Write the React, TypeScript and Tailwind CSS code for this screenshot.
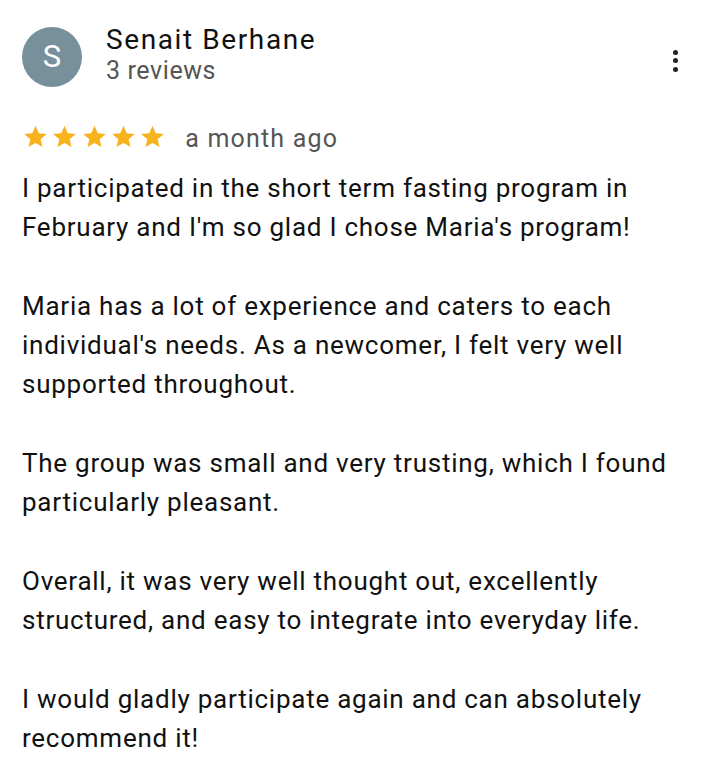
import React from "react";

const Star = () => (
  <svg width="27" height="27" viewBox="0 0 24 24" className="shrink-0">
    <path fill="#f6b31e" d="M12 2.5l2.9 6.6 7.1.6-5.4 4.7 1.6 7-6.2-3.7-6.2 3.7 1.6-7L2 9.7l7.1-.6z" />
  </svg>
);

export default function App() {
  const paras = [
    "I participated in the short term fasting program in February and I'm so glad I chose Maria's program!",
    "Maria has a lot of experience and caters to each individual's needs. As a newcomer, I felt very well supported throughout.",
    "The group was small and very trusting, which I found particularly pleasant.",
    "Overall, it was very well thought out, excellently structured, and easy to integrate into everyday life.",
    "I would gladly participate again and can absolutely recommend it!",
  ];
  return (
    <div className="w-[714px] h-[768px] bg-white overflow-hidden" style={{ fontFamily: "Roboto, 'Noto Sans', sans-serif" }}>
      <div className="flex items-start pt-[27px] pl-[22px] pr-[36px]">
        <div className="w-[60px] h-[60px] rounded-full bg-[#78909c] flex items-center justify-center text-white text-[31px] shrink-0">
          S
        </div>
        <div className="ml-[24px] flex-1">
          <div className="text-[28px] text-[#111] leading-[34px] mt-[-4px] tracking-[1.6px]">Senait Berhane</div>
          <div className="text-[25px] text-[#555] leading-[30px] mt-[-1px] tracking-[0.6px]">3 reviews</div>
        </div>
        <div className="flex flex-col gap-[3.5px] items-center mt-[22.5px]">
          <span className="w-[5px] h-[5px] rounded-full bg-[#222]" />
          <span className="w-[5px] h-[5px] rounded-full bg-[#222]" />
          <span className="w-[5px] h-[5px] rounded-full bg-[#222]" />
        </div>
      </div>
      <div className="flex items-start pl-[22px] mt-[34px] h-[30px]">
        <div className="flex gap-[2.3px] mt-[1.5px]">
          <Star /><Star /><Star /><Star /><Star />
        </div>
        <span className="ml-[19px] mt-[2.5px] text-[25px] leading-[30px] text-[#555] tracking-[1.2px]">a month ago</span>
      </div>
      <div className="pl-[22px] pr-[30px] mt-[18px] text-[26px] text-[#111] leading-[39.3px] tracking-[0.75px]">
        {paras.map((p, i) => (
          <p key={i} className={i > 0 ? "mt-[39.3px]" : ""}>{p}</p>
        ))}
      </div>
    </div>
  );
}
